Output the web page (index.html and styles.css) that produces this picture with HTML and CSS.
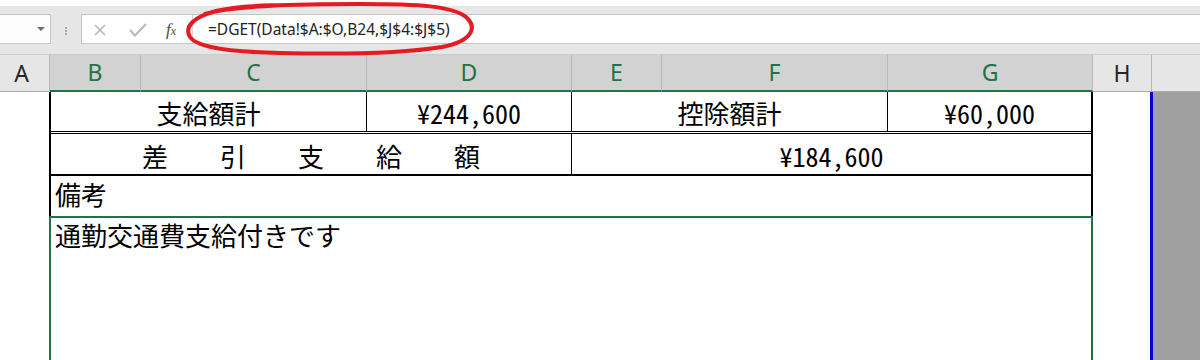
FILE: index.html
```html
<!DOCTYPE html>
<html lang="ja">
<head>
<meta charset="utf-8">
<title>Sheet</title>
<link rel="stylesheet" href="styles.css">
</head>
<body>
<div class="app">
  <div class="topstrip"></div>
  <div class="toolbar">
    <div class="namebox"><span class="caret"></span></div>
    <div class="grip"><i></i><i></i><i></i></div>
    <div class="fbar">
      <div class="fbtns">
        <svg class="icons" width="80" height="28" viewBox="0 0 80 28">
          <path d="M13 10 L23 20 M23 10 L13 20" stroke="#b9b9b9" stroke-width="1.6" fill="none"/>
          <path d="M48 15 L53 20.5 L64 9" stroke="#b9b9b9" stroke-width="2" fill="none"/>
        </svg>
        <span class="fx"><i class="f">f</i><i class="x">x</i></span>
      </div>
      <div class="formula">=DGET(Data!$A:$O,B24,$J$4:$J$5)</div>
    </div>
  </div>
  <div class="colheads">
    <div class="ch ca">A</div>
    <div class="ch sel cb">B</div>
    <div class="ch sel cc">C</div>
    <div class="ch sel cd">D</div>
    <div class="ch sel ce">E</div>
    <div class="ch sel cf">F</div>
    <div class="ch sel cg">G</div>
    <div class="ch ch-h">H</div>
    <div class="ch rest"></div>
  </div>
  <div class="sheet">
    <div class="gutter"></div>
    <div class="table">
      <div class="rows">
        <div class="row r1">
          <div class="cell w316">支給額計</div>
          <div class="cell w205 num">¥244,600</div>
          <div class="cell w316">控除額計</div>
          <div class="cell grow num">¥60,000</div>
        </div>
        <div class="row r2">
          <div class="cell w521">差　　引　　支　　給　　額</div>
          <div class="cell grow num">¥184,600</div>
        </div>
        <div class="row r3">
          <div class="cell left grow">備考</div>
        </div>
      </div>
      <div class="note">通勤交通費支給付きです</div>
    </div>
    <div class="hcol"></div>
    <div class="split"></div>
    <div class="pane"></div>
  </div>
  <svg class="annot" width="1200" height="360" viewBox="0 0 1200 360">
    <path d="M205 14 C232 5 300 4 360 4 C420 4 452 6 466 17 C478 28 472 41 442 47 C392 55 322 54 280 53 C238 52 198 49 190 37 C184 27 193 17 216 11 C232 7 262 5 292 5" stroke="#e31b23" stroke-width="4" fill="none" stroke-linecap="round"/>
  </svg>
</div>
</body>
</html>
```

FILE: styles.css
```css
html, body {
  margin: 0;
  padding: 0;
  background: #fff;
}
body {
  width: 1200px;
  height: 360px;
  overflow: hidden;
  font-family: "Noto Sans", "Liberation Sans", sans-serif;
}
.app {
  position: relative;
  width: 1200px;
  height: 360px;
  overflow: hidden;
  display: flex;
  flex-direction: column;
}
.topstrip {
  flex: none;
  height: 6px;
  background: #fff;
}
.toolbar {
  flex: none;
  height: 48px;
  box-sizing: border-box;
  padding-top: 8px;
  background: #e6e6e6;
  display: flex;
  align-items: flex-start;
}
.namebox {
  width: 51px;
  height: 30px;
  box-sizing: border-box;
  background: #fdfdfd;
  border: 1px solid #c6c6c6;
  border-left: none;
  display: flex;
  align-items: center;
  justify-content: flex-end;
  padding-right: 5px;
}
.caret {
  width: 0;
  height: 0;
  border-left: 4px solid transparent;
  border-right: 4px solid transparent;
  border-top: 4px solid #6d6d6d;
}
.grip {
  width: 30px;
  padding-top: 13px;
  display: flex;
  flex-direction: column;
  align-items: center;
  gap: 1px;
}
.grip i {
  display: block;
  width: 2px;
  height: 2px;
  background: #a8a8a8;
}
.fbar {
  flex: 1;
  height: 30px;
  box-sizing: border-box;
  border: 1px solid #c6c6c6;
  border-right: none;
  background: #fff;
  display: flex;
  align-items: stretch;
}
.fbtns {
  width: 110px;
  display: flex;
  align-items: center;
}
.icons {
  display: block;
}
.fx {
  margin-left: 4px;
  font-family: "Liberation Serif", serif;
  color: #4a4a4a;
  line-height: 1;
  display: flex;
  align-items: baseline;
}
.fx .f {
  font-size: 17px;
}
.fx .x {
  font-size: 12px;
}
.formula {
  flex: 1;
  border-left: 1px solid #d4d4d4;
  padding-left: 15px;
  display: flex;
  align-items: center;
  font-size: 15.5px;
  color: #222;
  white-space: nowrap;
}
.colheads {
  flex: none;
  height: 38px;
  box-sizing: border-box;
  border-top: 1px solid #cdcdcd;
  background: #e6e6e6;
  display: flex;
}
.ch {
  flex: none;
  height: 37px;
  box-sizing: border-box;
  border-right: 1px solid #b9b9b9;
  border-bottom: 1px solid #ababab;
  display: flex;
  align-items: center;
  justify-content: center;
  font-size: 23px;
  color: #262626;
  line-height: 1;
}
.ch.sel {
  background: #d2d2d2;
  color: #217346;
  border-bottom: 2px solid #217346;
}
.ca { width: 50px; padding-right: 6px; }
.cb { width: 91px; }
.cc { width: 226px; }
.cd { width: 205px; }
.ce { width: 90px; }
.cf { width: 226px; }
.cg { width: 205px; }
.ch-h { width: 59px; }
.ch.rest { flex: 1; border-right: none; }

.sheet {
  flex: 1;
  display: flex;
  min-height: 0;
}
.gutter {
  width: 49px;
  flex: none;
}
.table {
  width: 1044px;
  flex: none;
  display: flex;
  flex-direction: column;
  font-family: "Noto Sans CJK JP", "Noto Sans", sans-serif;
  font-size: 26px;
  color: #000;
  line-height: 1.3;
}
.rows {
  border-left: 2px solid #000;
  border-right: 2px solid #000;
}
.row {
  display: flex;
  box-sizing: border-box;
}
.r1 {
  height: 42px;
  border-bottom: 3px double #000;
}
.r2 {
  height: 42px;
  border-bottom: 2px solid #000;
}
.r3 {
  height: 40px;
}
.cell {
  box-sizing: border-box;
  border-right: 1px solid #000;
  display: flex;
  align-items: center;
  justify-content: center;
  white-space: pre;
  padding-top: 3px;
}
.cell:last-child {
  border-right: none;
}
.cell.left {
  justify-content: flex-start;
  padding: 0 0 4px 4px;
}
.w316 { width: 316px; }
.w205 { width: 205px; }
.w521 { width: 521px; }
.grow { flex: 1; }
.num {
  font-feature-settings: "hwid" 1;
}
.note {
  flex: 1;
  border: 2px solid #217346;
  border-bottom: none;
  padding: 0 4px;
}
.hcol {
  width: 57px;
  flex: none;
}
.split {
  width: 3px;
  flex: none;
  background: #0000dc;
}
.pane {
  flex: 1;
  background: #a0a0a0;
}
.annot {
  position: absolute;
  left: 0;
  top: 0;
  pointer-events: none;
}
```
